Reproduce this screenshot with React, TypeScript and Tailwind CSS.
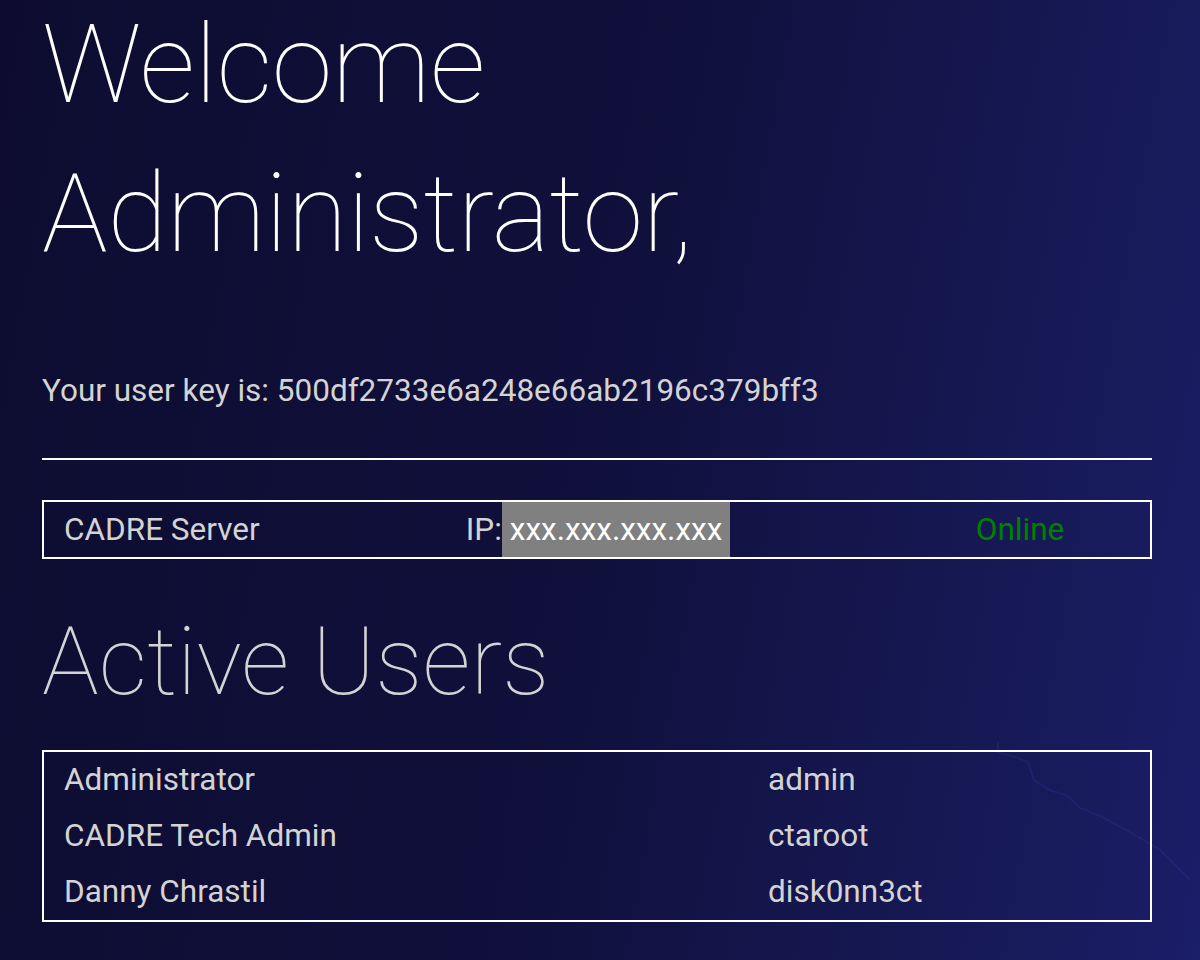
import React from 'react';

const USERS = [
  { name: 'Administrator', handle: 'admin' },
  { name: 'CADRE Tech Admin', handle: 'ctaroot' },
  { name: 'Danny Chrastil', handle: 'disk0nn3ct' },
];

const App: React.FC = () => {
  return (
    <div className="relative min-h-screen w-full overflow-hidden bg-[linear-gradient(100deg,#0d0c30_0%,#10103c_50%,#171a58_85%,#1b1e68_100%)] font-['Roboto','Liberation_Sans',sans-serif] text-[#d3d3d3]">
      {/* faint lightning streak */}
      <svg className="pointer-events-none absolute left-[990px] top-[740px]" width="210" height="200" viewBox="0 0 210 200" fill="none">
        <path
          d="M8 2 L8 12 L28 18 L38 22 L44 40 L60 50 L78 56 L90 68 L110 76 L140 92 L170 110 L200 140"
          stroke="#2a3090"
          strokeWidth="2"
          strokeOpacity="0.35"
        />
      </svg>

      <div className="relative w-[1110px] ml-[42px]">
        <h1 className="text-[110px] leading-[130px] font-thin text-white tracking-[-0.5px]">
          <span className="block">Welcome</span>
          <span className="block mt-[19px]">Administrator,</span>
        </h1>

        <p className="mt-[92px] text-[31.5px] leading-[40px]">
          Your user key is: 500df2733e6a248e66ab2196c379bff3
        </p>

        <div className="mt-[47px] h-[2px] bg-white" />

        <div className="mt-[40px] grid grid-cols-[262px_1fr_260px] border-2 border-white h-[59px] text-[31.5px]">
          <div className="flex items-center pl-5">CADRE Server</div>
          <div className="flex items-stretch justify-center">
            <span className="flex items-center">IP:</span>
            <span className="flex items-center bg-[#808080] px-2 text-white">xxx.xxx.xxx.xxx</span>
          </div>
          <div className="flex items-center justify-center text-[#008000]">Online</div>
        </div>

        <h2 className="mt-[48px] text-[95px] leading-[110px] font-thin text-[#d3d3d3]">
          Active Users
        </h2>

        <div className="mt-[33px] border-2 border-white">
          {USERS.map((u) => (
            <div key={u.handle} className="grid grid-cols-[704px_1fr] text-[31.5px] leading-[56px]">
              <div className="pl-5">{u.name}</div>
              <div className="pl-5">{u.handle}</div>
            </div>
          ))}
        </div>
      </div>
    </div>
  );
};

export default App;
